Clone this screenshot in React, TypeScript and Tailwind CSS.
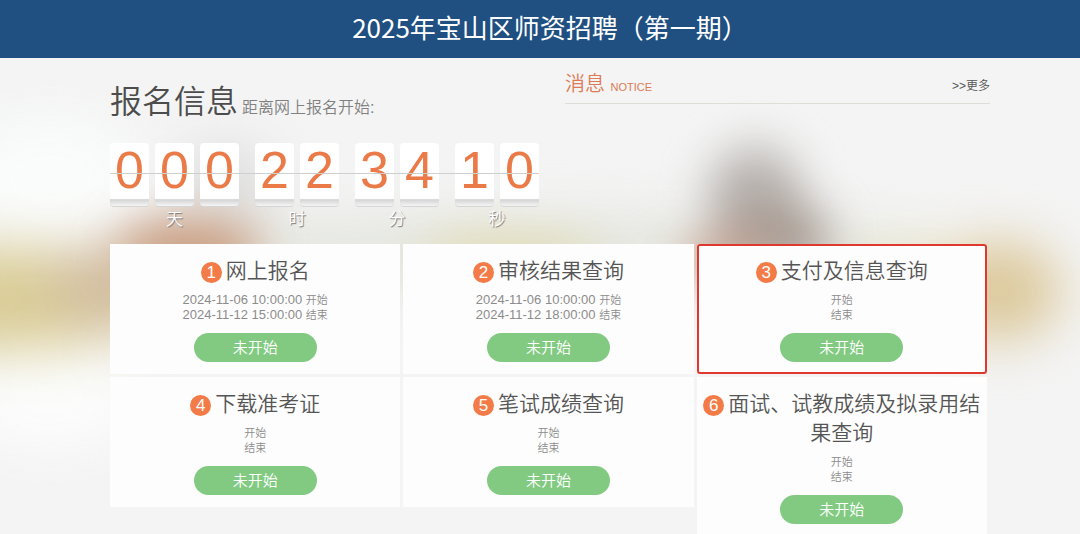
const countdown = [
  { unit: '天', digits: ['0', '0', '0'] },
  { unit: '时', digits: ['2', '2'] },
  { unit: '分', digits: ['3', '4'] },
  { unit: '秒', digits: ['1', '0'] },
]

type Step = { title: string; start?: string; end?: string; active?: boolean }

const steps: Step[] = [
  { title: '网上报名', start: '2024-11-06 10:00:00', end: '2024-11-12 15:00:00' },
  { title: '审核结果查询', start: '2024-11-06 10:00:00', end: '2024-11-12 18:00:00' },
  { title: '支付及信息查询', active: true },
  { title: '下载准考证' },
  { title: '笔试成绩查询' },
  { title: '面试、试教成绩及拟录用结果查询' },
]

// Out-of-focus photo behind the page
function Backdrop() {
  return (
    <svg
      className="absolute inset-0 -z-10 h-full w-full"
      viewBox="0 0 1080 476"
      preserveAspectRatio="none"
      aria-hidden="true"
    >
      <defs>
        <filter id="soft" filterUnits="userSpaceOnUse" x="-200" y="-200" width="1480" height="876" colorInterpolationFilters="sRGB">
          <feGaussianBlur stdDeviation="22" />
        </filter>
        <filter id="softer" filterUnits="userSpaceOnUse" x="-200" y="-200" width="1480" height="876" colorInterpolationFilters="sRGB">
          <feGaussianBlur stdDeviation="26" />
        </filter>
      </defs>
      <rect width="1080" height="476" fill="#f4f4f4" />
      <g filter="url(#softer)">
        <ellipse cx="50" cy="120" rx="90" ry="60" fill="#fafcfb" />
        <ellipse cx="50" cy="340" rx="90" ry="50" fill="#fbfcfb" />
        <ellipse cx="540" cy="195" rx="420" ry="36" fill="#e3e5dd" />
        <ellipse cx="225" cy="125" rx="50" ry="36" fill="#dcdcdc" />
        <ellipse cx="-10" cy="240" rx="180" ry="52" fill="#dacd98" />
        <ellipse cx="110" cy="226" rx="60" ry="40" fill="#d2bd9f" />
        <ellipse cx="930" cy="215" rx="90" ry="24" fill="#e8e3c0" />
        <ellipse cx="1000" cy="232" rx="62" ry="50" fill="#dcc99c" />
      </g>
      <g filter="url(#soft)">
        <ellipse cx="510" cy="200" rx="90" ry="22" fill="#e2dbb2" />
        <ellipse cx="190" cy="192" rx="72" ry="32" fill="#c99c80" />
        <ellipse cx="755" cy="140" rx="48" ry="52" fill="#b7b2af" />
        <ellipse cx="775" cy="180" rx="56" ry="38" fill="#a89c94" />
        <ellipse cx="725" cy="200" rx="44" ry="22" fill="#c9a392" />
      </g>
    </svg>
  )
}

function Countdown() {
  return (
    <div className="relative mt-[11px] flex w-fit gap-4">
      {countdown.map(({ unit, digits }) => (
        <div key={unit}>
          <div className="flex gap-[6px]">
            {digits.map((digit, i) => (
              <div
                key={i}
                className="h-16 w-[39px] rounded-sm border-b border-[#d5d5d5] bg-linear-to-b from-white from-88% via-[#d4d4d4] via-90% to-[#f5f5f5] text-center text-[52px] leading-[54px] text-[#ea7a48]"
              >
                {digit}
              </div>
            ))}
          </div>
          <div className="pt-[2px] text-center text-[17px] leading-[22px] font-[350] text-white text-shadow-[1px_1px_1px_#777777]">
            {unit}
          </div>
        </div>
      ))}
      <div className="absolute inset-x-0 top-[30px] h-px bg-[#cfcfcf]" />
    </div>
  )
}

function StepCard({ step, index }: { step: Step; index: number }) {
  return (
    <section
      className={
        step.active
          ? 'rounded-[3px] bg-[#fdfdfd] px-1 py-3 text-center outline-2 -outline-offset-2 outline-[#df382f]'
          : 'bg-[#fdfdfd] px-1 py-3 text-center'
      }
    >
      <h2 className="text-[21px] leading-[29px] font-[350] text-[#555555]">
        <span className="mr-1 inline-block size-[21px] rounded-full bg-[#f37b47] text-center text-[17px] leading-[21px] font-normal text-white">
          {index + 1}
        </span>
        {step.title}
      </h2>
      <div className="mt-2 text-[11px] leading-[15px] font-[350] text-[#8c8c8c]">
        <p className="h-[15px]">
          {step.start && <span className="text-[13px] leading-none font-normal">{step.start} </span>}开始
        </p>
        <p className="h-[15px]">
          {step.end && <span className="text-[13px] leading-none font-normal">{step.end} </span>}结束
        </p>
      </div>
      <button
        type="button"
        className="mx-auto mt-[10px] block h-[29px] w-[123px] rounded-full bg-[#82ca82] text-[15px] leading-[29px] font-[350] text-white"
      >
        未开始
      </button>
    </section>
  )
}

export default function App() {
  return (
    <div className="flex min-h-screen flex-col font-['Liberation_Sans','Noto_Sans_CJK_SC',sans-serif]">
      <header className="bg-[#1f5081] pt-[10px] pb-[14px] pl-5 text-center">
        <h1 className="font-['Noto_Sans_CJK_SC',sans-serif] text-[26px] leading-[34px] text-white">
          2025年宝山区师资招聘（第一期）
        </h1>
      </header>

      <main className="relative isolate flex-1 overflow-hidden pl-5">
        <Backdrop />
        <div className="mx-auto max-w-[880px]">
          <div className="grid grid-cols-[1fr_425px] gap-[25px]">
            <div className="pt-5">
              <h2 className="text-[32px] leading-[48px] font-[350] text-[#4c4c4c]">
                报名信息
                <small className="ml-1 text-[16px] text-[#808080]">距离网上报名开始:</small>
              </h2>
              <Countdown />
            </div>
            <div className="pt-3">
              <div className="flex items-center justify-between border-b border-[#dfddd7] pb-px">
                <h2 className="text-[20px] leading-[29px] font-[350] text-[#dc7b55]">
                  消息 <small className="text-[11px] font-normal">NOTICE</small>
                </h2>
                <a href="#" className="text-[12px] leading-[20px] font-[350] text-[#555555]">
                  &gt;&gt;更多
                </a>
              </div>
            </div>
          </div>

          <div className="mt-[13px] mr-[3px] grid grid-cols-3 items-start gap-[3px]">
            {steps.map((step, i) => (
              <StepCard key={step.title} step={step} index={i} />
            ))}
          </div>
        </div>
      </main>
    </div>
  )
}
